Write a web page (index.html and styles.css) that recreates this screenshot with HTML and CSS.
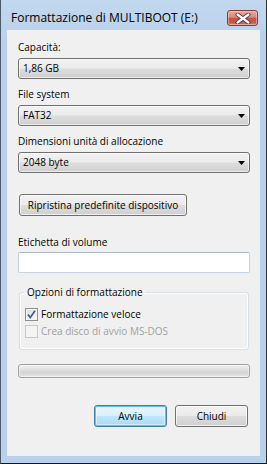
FILE: index.html
```html
<!DOCTYPE html>
<html lang="it">
<head>
<meta charset="utf-8">
<title>Formattazione di MULTIBOOT (E:)</title>
<link rel="stylesheet" href="styles.css">
</head>
<body>
<div class="window">
  <div class="titlebar">
    <span class="title">Formattazione di MULTIBOOT (E:)</span>
    <div class="close">
      <svg width="16" height="11" viewBox="0 0 16 11">
        <path d="M2.5 1.5 L13.5 9.5 M13.5 1.5 L2.5 9.5" stroke="#3b2a4e" stroke-width="4" stroke-linecap="round"/>
        <path d="M2.5 1.5 L13.5 9.5 M13.5 1.5 L2.5 9.5" stroke="#ffffff" stroke-width="2.2" stroke-linecap="round"/>
      </svg>
    </div>
  </div>
  <div class="client">
    <div class="lbl first">Capacità:</div>
    <div class="combo"><span>1,86 GB</span><svg class="arrow" width="7" height="4" viewBox="0 0 7 4"><path d="M0 0H7L3.5 4Z" fill="#000"/></svg></div>

    <div class="lbl">File system</div>
    <div class="combo"><span>FAT32</span><svg class="arrow" width="7" height="4" viewBox="0 0 7 4"><path d="M0 0H7L3.5 4Z" fill="#000"/></svg></div>

    <div class="lbl">Dimensioni unità di allocazione</div>
    <div class="combo"><span>2048 byte</span><svg class="arrow" width="7" height="4" viewBox="0 0 7 4"><path d="M0 0H7L3.5 4Z" fill="#000"/></svg></div>

    <div class="btn restore">Ripristina predefinite dispositivo</div>

    <div class="lbl vol">Etichetta di volume</div>
    <div class="textbox"></div>

    <fieldset class="group">
      <legend>Opzioni di formattazione</legend>
      <div class="check">
        <span class="box checked">
          <svg width="11" height="11" viewBox="0 0 11 11"><path d="M2 5.5 L4.3 8.5 L9 1.8" fill="none" stroke="#4a5f97" stroke-width="1.8"/></svg>
        </span>
        <span>Formattazione veloce</span>
      </div>
      <div class="check disabled">
        <span class="box"></span>
        <span>Crea disco di avvio MS-DOS</span>
      </div>
    </fieldset>

    <div class="progress"></div>

    <div class="actions">
      <div class="btn default">Avvia</div>
      <div class="btn">Chiudi</div>
    </div>
  </div>
</div>
</body>
</html>
```

FILE: styles.css
```css
html, body {
  margin: 0;
  padding: 0;
  background: #b9d1ea;
}

body {
  font-family: "Open Sans", "Noto Sans", sans-serif;
  font-size: 10px;
  color: #000;
}

.window {
  width: 267px;
  height: 464px;
  box-sizing: border-box;
  border-left: 1px solid #4b5a6a;
  border-right: 1px solid #2b2f33;
  border-bottom: 1px solid #15191d;
  padding: 0 6px 7px 6px;
  background: linear-gradient(#c2d8ef, #b9d1ea 40px);
  display: flex;
  flex-direction: column;
}

.titlebar {
  height: 30px;
  display: flex;
  justify-content: space-between;
  align-items: flex-start;
  flex: none;
}

.title {
  margin: 10px 0 0 4px;
  font-size: 12px;
  line-height: 15px;
}

.close {
  margin: 10px 2px 0 0;
  width: 31px;
  height: 16px;
  box-sizing: border-box;
  border: 1px solid #8c3b32;
  border-radius: 3px;
  background: linear-gradient(#e9a99f 0%, #d78a80 45%, #c6523f 50%, #c15a45 80%, #d9826d 100%);
  box-shadow: inset 0 0 0 1px rgba(255, 220, 210, 0.45);
  display: flex;
  align-items: center;
  justify-content: center;
}

.client {
  flex: 1;
  background: #f0f0f0;
  padding: 10px 10px 0 11px;
  display: flex;
  flex-direction: column;
}

.lbl {
  line-height: 15px;
  height: 15px;
  margin-top: 8px;
}

.lbl.first {
  margin-top: 0;
}

.combo {
  margin-top: 3px;
  height: 21px;
  box-sizing: border-box;
  border: 1px solid #707070;
  border-radius: 3px;
  background: linear-gradient(#f2f2f2 0%, #ebebeb 48%, #dddddd 52%, #cfcfcf 100%);
  box-shadow: inset 0 0 0 1px rgba(255, 255, 255, 0.6);
  display: flex;
  align-items: center;
  justify-content: space-between;
  padding: 0 4px 0 4px;
  line-height: 15px;
}

.btn {
  height: 22px;
  box-sizing: border-box;
  border: 1px solid #707070;
  border-radius: 3px;
  background: linear-gradient(#f2f2f2 0%, #ebebeb 48%, #dddddd 52%, #cfcfcf 100%);
  box-shadow: inset 0 0 0 1px rgba(255, 255, 255, 0.7);
  display: flex;
  align-items: center;
  justify-content: center;
  line-height: 15px;
}

.restore {
  margin-top: 21px;
  margin-left: 1px;
  width: 168px;
}

.lbl.vol {
  margin-top: 19px;
}

.textbox {
  margin-top: 2px;
  height: 21px;
  box-sizing: border-box;
  background: #fff;
  border: 1px solid #c5d3e2;
  border-top-color: #abb9c9;
  border-radius: 2px;
}

.group {
  margin: 12px 1px 0 1px;
  padding: 0 5px 10px 5px;
  border: 1px solid #d5dfe5;
  border-radius: 3px;
  box-shadow: inset 0 0 0 1px #ffffff;
  min-width: 0;
}

.group legend {
  padding: 0 2px;
  line-height: 15px;
}

.check {
  display: flex;
  align-items: center;
  gap: 3px;
  line-height: 15px;
  height: 15px;
  margin-top: 2px;
}

.group legend + .check {
  margin-top: 7px;
}

.box {
  width: 13px;
  height: 13px;
  box-sizing: border-box;
  border: 1px solid #8e8f8f;
  background: linear-gradient(135deg, #dcdcdc, #fbfbfb);
  box-shadow: inset 0 0 0 1px #f4f4f4;
  display: flex;
  align-items: center;
  justify-content: center;
  flex: none;
}

.check.disabled {
  color: #a0a0a0;
}

.check.disabled .box {
  border-color: #c8c8c8;
  background: #f4f4f4;
}

.progress {
  margin-top: 14px;
  height: 14px;
  box-sizing: border-box;
  border: 1px solid #a0a0a0;
  border-radius: 3px;
  background: linear-gradient(#f0f0f0 0%, #e0e0e0 40%, #d3d3d3 60%, #e6e6e6 100%);
  box-shadow: inset 0 0 0 1px rgba(255, 255, 255, 0.5);
}

.actions {
  margin-top: 27px;
  display: flex;
  justify-content: flex-end;
  gap: 8px;
  padding-right: 2px;
}

.actions .btn {
  width: 73px;
}

.btn.default {
  border-color: #3c7fb1;
  background: linear-gradient(#eaf6fd 0%, #d9f0fc 48%, #bee6fd 52%, #a7d9f5 100%);
  box-shadow: inset 0 0 0 1px #5ac2ef, inset 0 0 0 2px rgba(255, 255, 255, 0.5);
}
```
